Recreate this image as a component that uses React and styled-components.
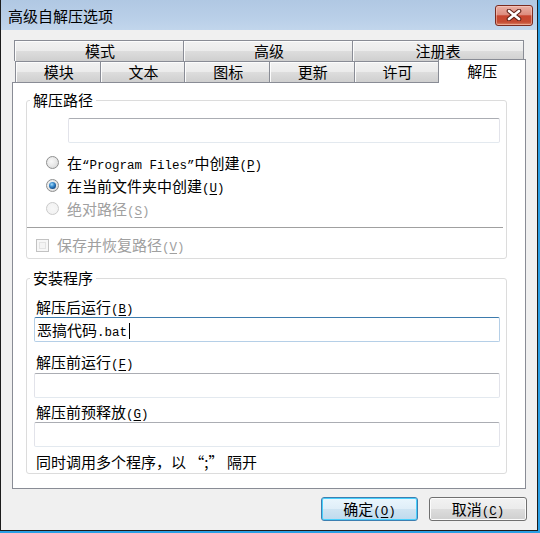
import React from "react";
import styled, { createGlobalStyle } from "styled-components";

const GlobalStyle = createGlobalStyle`
  html, body {
    margin: 0;
    padding: 0;
    background: #2b9fe4;
  }
  body {
    font-family: "Noto Sans CJK SC", "Liberation Sans", sans-serif;
    font-size: 15px;
    color: #000;
  }
`;

const Window = styled.div`
  width: 538px;
  height: 531px;
  box-sizing: border-box;
  border: 1px solid #1c1c1c;
  border-top: none;
  display: flex;
  flex-direction: column;
  background: #f0f0f0;
`;

const TitleBar = styled.div`
  height: 30px;
  flex-shrink: 0;
  display: flex;
  align-items: center;
  justify-content: space-between;
  padding: 0 4px 0 7px;
  background: linear-gradient(to bottom, #b0c8e3 0%, #b9cfe8 60%, #c2d6ec 100%);
`;

const TitleText = styled.div`
  font-size: 15px;
  line-height: 20px;
  padding-top: 2px;
`;

const CloseButton = styled.div`
  width: 38px;
  height: 21px;
  box-sizing: border-box;
  border: 1px solid #7a2b20;
  border-radius: 3px;
  display: flex;
  align-items: center;
  justify-content: center;
  background: linear-gradient(
    to bottom,
    #eab0a5 0%,
    #dd8d7f 45%,
    #c8452f 52%,
    #c44c33 85%,
    #de8a6c 100%
  );
  box-shadow: inset 0 0 0 1px rgba(255, 220, 210, 0.45);
`;

const Client = styled.div`
  flex: 1;
  display: flex;
  flex-direction: column;
  padding: 10px 11px 0 11px;
`;

const TabRow = styled.div`
  display: flex;
  height: 21px;
  padding: 0 ${({ $pr }) => $pr}px 0 ${({ $pl }) => $pl}px;
`;

const Tab = styled.div`
  flex: 1 1 0;
  min-width: 0;
  box-sizing: border-box;
  height: ${({ $active }) => ($active ? 24 : 21)}px;
  border: 1px solid #898c95;
  border-bottom: none;
  text-align: center;
  line-height: ${({ $active }) => ($active ? 22 : 20)}px;
  position: relative;
  z-index: ${({ $active }) => ($active ? 2 : 1)};
  margin: ${({ $active }) => ($active ? "-2px -2px 0 -3px" : "0")};
  background: ${({ $active }) =>
    $active
      ? "#fff"
      : "linear-gradient(to bottom, #f2f2f2 0%, #ebebeb 50%, #dddddd 50%, #cfcfcf 100%)"};
  box-shadow: ${({ $active }) =>
    $active ? "none" : "inset 1px 1px 0 #fcfcfc"};

  & + & {
    margin-left: ${({ $active }) => ($active ? -3 : -1)}px;
  }
`;

const Panel = styled.div`
  height: 407px;
  box-sizing: border-box;
  border: 1px solid #898c95;
  background: #fff;
  padding: 7px 18px 0 13px;
`;

const Group = styled.fieldset`
  margin: ${({ $mt }) => $mt || 0}px 0 0 0;
  padding: 0 0 ${({ $pb }) => $pb || 0}px 0;
  border: 1px solid #dcdcdc;
  border-radius: 3px;
  min-width: 0;
`;

const Legend = styled.legend`
  margin-left: 3px;
  padding: 0 3px;
  height: 20px;
  line-height: 20px;
  font-size: 15px;
`;

const TextBox = styled.div`
  height: 25px;
  box-sizing: border-box;
  margin: ${({ $mt }) => $mt || 0}px 6px 0 ${({ $ml }) => $ml}px;
  padding: 0 2px;
  border: 1px solid;
  border-color: ${({ $focused }) =>
    $focused
      ? "#3d7bad #b5cfe7 #b5cfe7 #b5cfe7"
      : "#abadb3 #e2e3ea #e3e9ef #e2e3ea"};
  border-radius: 2px;
  line-height: 23px;
  white-space: nowrap;
  background: #fff;
`;

const Caret = styled.span`
  display: inline-block;
  width: 1px;
  height: 16px;
  margin-left: 2px;
  vertical-align: -3px;
  background: #000;
`;

const OptionRow = styled.div`
  display: flex;
  align-items: center;
  gap: 8px;
  height: ${({ $h }) => $h || 23}px;
  margin-top: ${({ $mt }) => $mt || 0}px;
  padding-left: ${({ $pl }) => $pl}px;
  color: ${({ $disabled }) => ($disabled ? "#a0a0a0" : "#000")};
  line-height: 20px;
`;

const Radio = styled.span`
  width: 13px;
  height: 13px;
  box-sizing: border-box;
  flex-shrink: 0;
  border-radius: 50%;
  border: 1px solid ${({ $disabled }) => ($disabled ? "#cacaca" : "#8e8f8f")};
  background: ${({ $disabled }) =>
    $disabled
      ? "radial-gradient(circle at 50% 50%, #f7f7f7 0, #f1f1f1 100%)"
      : "radial-gradient(circle at 40% 40%, #f9f9f9 0, #e6e6e6 55%, #cfcfcf 100%)"};
  display: flex;
  align-items: center;
  justify-content: center;

  &::after {
    content: "";
    display: ${({ $checked }) => ($checked ? "block" : "none")};
    width: 7px;
    height: 7px;
    border-radius: 50%;
    background: radial-gradient(
      circle at 40% 35%,
      #a6dcfb 0,
      #3e8fd0 35%,
      #14508f 70%,
      #0c3462 100%
    );
  }
`;

const Checkbox = styled.span`
  width: 13px;
  height: 13px;
  box-sizing: border-box;
  flex-shrink: 0;
  border: 1px solid #c2c2c2;
  background: #f4f4f4;
  box-shadow: inset 0 0 0 2px #f7f7f7, inset 0 0 0 3px #e3e3e3;
`;

const Separator = styled.div`
  height: 1px;
  margin: 7px 3px 0 0;
  background: #a0a0a0;
`;

const FieldLabel = styled.div`
  height: 20px;
  line-height: 20px;
  padding-left: 9px;
  margin-top: ${({ $mt }) => $mt || 0}px;
`;

const Latin = styled.span`
  font-family: "Liberation Mono", "DejaVu Sans Mono", monospace;
  font-size: 12.5px;
  line-height: 1;

  u {
    text-underline-offset: 2px;
  }
`;

const ButtonRow = styled.div`
  display: flex;
  justify-content: flex-end;
  gap: 11px;
  margin: 8px -1px 0 0;
`;

const Button = styled.div`
  width: ${({ $w }) => $w}px;
  height: 24px;
  box-sizing: border-box;
  border: 1px solid ${({ $default }) => ($default ? "#3c7fb1" : "#707070")};
  border-radius: 3px;
  text-align: center;
  line-height: 22px;
  background: ${({ $default }) =>
    $default
      ? "linear-gradient(to bottom, #eaf6fd 0%, #dfeef8 50%, #cfe4f2 50%, #bedaee 100%)"
      : "linear-gradient(to bottom, #f2f2f2 0%, #ebebeb 50%, #dddddd 50%, #cfcfcf 100%)"};
  box-shadow: ${({ $default }) =>
    $default ? "inset 0 0 0 1px #48d0fc" : "inset 0 0 0 1px #fcfcfc"};
`;

const Hot = ({ children }) => (
  <Latin>
    (<u>{children}</u>)
  </Latin>
);

const CloseIcon = () => (
  <svg width="16" height="12" viewBox="0 0 16 12">
    <path
      d="M3 2 L13 10 M13 2 L3 10"
      stroke="#5b1c13"
      strokeWidth="4.6"
      strokeLinecap="round"
    />
    <path
      d="M3 2 L13 10 M13 2 L3 10"
      stroke="#fff"
      strokeWidth="2.6"
      strokeLinecap="round"
    />
  </svg>
);

const topTabs = ["模式", "高级", "注册表"];
const bottomTabs = ["模块", "文本", "图标", "更新", "许可", "解压"];

const App = () => {
  return (
    <>
      <GlobalStyle />
      <Window>
        <TitleBar>
          <TitleText>高级自解压选项</TitleText>
          <CloseButton>
            <CloseIcon />
          </CloseButton>
        </TitleBar>
        <Client>
          <TabRow $pl={2} $pr={2}>
            {topTabs.map((t) => (
              <Tab key={t}>{t}</Tab>
            ))}
          </TabRow>
          <TabRow $pl={3} $pr={2}>
            {bottomTabs.map((t) => (
              <Tab key={t} $active={t === "解压"}>
                {t}
              </Tab>
            ))}
          </TabRow>
          <Panel>
            <Group $pb={3}>
              <Legend>解压路径</Legend>
              <TextBox $mt={8} $ml={41} />
              <OptionRow $mt={8} $pl={19}>
                <Radio />
                <span>
                  在<Latin>“Program Files”</Latin>中创建<Hot>P</Hot>
                </span>
              </OptionRow>
              <OptionRow $pl={19}>
                <Radio $checked />
                <span>
                  在当前文件夹中创建<Hot>U</Hot>
                </span>
              </OptionRow>
              <OptionRow $pl={19} $disabled>
                <Radio $disabled />
                <span>
                  绝对路径<Hot>S</Hot>
                </span>
              </OptionRow>
              <Separator />
              <OptionRow $mt={7} $pl={9} $h={20} $disabled>
                <Checkbox />
                <span>
                  保存并恢复路径<Hot>V</Hot>
                </span>
              </OptionRow>
            </Group>
            <Group $mt={9} $pb={1}>
              <Legend>安装程序</Legend>
              <FieldLabel $mt={9}>
                解压后运行<Hot>B</Hot>
              </FieldLabel>
              <TextBox $ml={7} $focused>
                恶搞代码<Latin>.bat</Latin>
                <Caret />
              </TextBox>
              <FieldLabel $mt={10}>
                解压前运行<Hot>F</Hot>
              </FieldLabel>
              <TextBox $mt={1} $ml={7} />
              <FieldLabel $mt={4}>
                解压前预释放<Hot>G</Hot>
              </FieldLabel>
              <TextBox $ml={7} />
              <FieldLabel $mt={5}>同时调用多个程序，以 “;” 隔开</FieldLabel>
            </Group>
          </Panel>
          <ButtonRow>
            <Button $w={97} $default>
              确定<Hot>O</Hot>
            </Button>
            <Button $w={98}>
              取消<Hot>C</Hot>
            </Button>
          </ButtonRow>
        </Client>
      </Window>
    </>
  );
};

export default App;
